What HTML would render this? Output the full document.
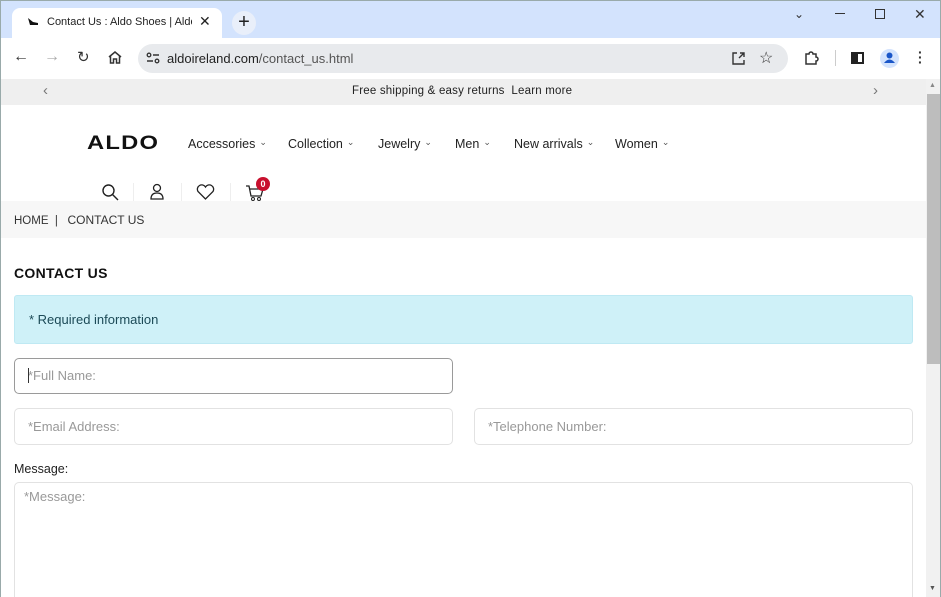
<!DOCTYPE html>
<html><head><meta charset="utf-8"><style>
*{box-sizing:border-box;margin:0;padding:0}
html,body{width:941px;height:597px;overflow:hidden}
body{font-family:"Liberation Sans",sans-serif;background:#fff;position:relative;color:#222}
.abs{position:absolute}
.nav a{position:absolute;top:137px;font-size:12.5px;color:#222;white-space:nowrap}
.nav a:after{content:"⌄";font-size:9px;margin-left:4px;position:relative;top:-3px;color:#555}
.inp{position:absolute;border:1px solid #e2e2e2;border-radius:5px;font-size:13px;color:#999;padding-left:13px}
</style></head><body>
<div class="abs" style="left:0;top:0;width:941px;height:38px;background:#d3e3fd;border:1px solid #9aa;border-bottom:none"></div>
<div class="abs" style="left:12px;top:8px;width:210px;height:30px;background:#fff;border-radius:8px 8px 0 0"></div>
<svg class="abs" style="left:27px;top:17px" width="12" height="10"><path d="M1 1 L3 8 L11 8 L11 6 L6 5 Z" fill="#111"/></svg>
<div class="abs" style="left:47px;top:16px;width:145px;overflow:hidden;white-space:nowrap;font-size:11px;color:#222">Contact Us : Aldo Shoes | Aldo | Aldo</div>
<div class="abs" style="left:199px;top:13px;font-size:14px">✕</div>
<div class="abs" style="left:232px;top:11px;width:24px;height:24px;border-radius:50%;background:#e9effa;text-align:center;font-size:20px;line-height:22px">+</div>
<div class="abs" style="left:794px;top:7px;font-size:12px;color:#333">⌄</div>
<div class="abs" style="left:835px;top:13px;width:10px;height:1px;background:#333"></div>
<div class="abs" style="left:875px;top:9px;width:10px;height:10px;border:1px solid #333"></div>
<div class="abs" style="left:914px;top:6px;font-size:14px;color:#333">✕</div>
<div class="abs" style="left:0;top:38px;width:941px;height:41px;background:#fff;border-left:1px solid #9aa;border-right:1px solid #9aa"></div>
<div class="abs" style="left:13px;top:48px;font-size:16px;color:#333">←</div>
<div class="abs" style="left:44px;top:48px;font-size:16px;color:#aaa">→</div>
<div class="abs" style="left:77px;top:48px;font-size:15px;color:#333">↻</div>
<svg class="abs" style="left:107px;top:50px" width="16" height="15"><path d="M2 7 L8 2 L14 7 M3.5 6 V13 H6.5 V9 H9.5 V13 H12.5 V6" fill="none" stroke="#333" stroke-width="1.5"/></svg>
<div class="abs" style="left:138px;top:44px;width:650px;height:29px;background:#e8eaed;border-radius:15px"></div>
<svg class="abs" style="left:146px;top:51px" width="14" height="14"><circle cx="3" cy="4" r="1.8" fill="none" stroke="#333" stroke-width="1.3"/><path d="M7 4 H13 M1 10 H7" stroke="#333" stroke-width="1.4"/><circle cx="11" cy="10" r="1.8" fill="none" stroke="#333" stroke-width="1.3"/></svg>
<div class="abs" style="left:167px;top:51px;font-size:13px;color:#222">aldoireland.com<span style="color:#555">/contact_us.html</span></div>
<svg class="abs" style="left:731px;top:51px" width="15" height="14"><path d="M6 2 H2 V13 H13 V9 M8 7 L13 2 M9 2 H13 V6" fill="none" stroke="#333" stroke-width="1.4"/></svg>
<div class="abs" style="left:759px;top:48px;font-size:16px;color:#333">☆</div>
<svg class="abs" style="left:803px;top:50px" width="16" height="16"><path d="M3 4 H6 A2 2 0 0 1 10 4 H13 V7 A2 2 0 0 1 13 11 V14 H3 Z" fill="none" stroke="#333" stroke-width="1.5"/></svg>
<div class="abs" style="left:835px;top:50px;width:1px;height:16px;background:#ccc"></div>
<div class="abs" style="left:851px;top:52px;width:13px;height:12px;border:2px solid #222;border-left-width:7px"></div>
<div class="abs" style="left:880px;top:49px;width:19px;height:19px;border-radius:50%;background:#d3e3fd"></div>
<svg class="abs" style="left:883px;top:51px" width="13" height="14"><circle cx="6.5" cy="4.5" r="3" fill="#1a56c8"/><path d="M1 12 Q6.5 5 12 12 Z" fill="#1a56c8"/></svg>
<div class="abs" style="left:918px;top:50px;font-size:14px;font-weight:bold;line-height:5px;color:#333">·<br>·<br>·</div>
<div class="abs" style="left:0;top:79px;width:926px;height:518px;background:#fff;border-left:1px solid #9aa"></div>
<div class="abs" style="left:1px;top:79px;width:925px;height:26px;background:#efefef"></div>
<div class="abs" style="left:43px;top:82px;font-size:15px;color:#777">‹</div>
<div class="abs" style="left:873px;top:82px;font-size:15px;color:#777">›</div>
<div class="abs" style="left:352px;top:85px;font-size:11.5px;color:#222;letter-spacing:0.2px">Free shipping &amp; easy returns&nbsp; Learn more</div>
<div class="abs" style="left:926px;top:79px;width:15px;height:518px;background:#f1f1f1;border-right:1px solid #9aa"></div>
<div class="abs" style="left:927px;top:94px;width:13px;height:270px;background:#bdbdbd"></div>
<div class="abs" style="left:929px;top:82px;font-size:7px;color:#888">▲</div>
<div class="abs" style="left:929px;top:585px;font-size:7px;color:#555">▼</div>
<div class="abs" style="left:87px;top:133px;font-size:19px;font-weight:900;letter-spacing:1px;color:#111;transform:scaleX(1.25);transform-origin:left">ALDO</div>
<div class="nav">
<a style="left:188px">Accessories</a><a style="left:288px">Collection</a><a style="left:378px">Jewelry</a><a style="left:455px">Men</a><a style="left:514px">New arrivals</a><a style="left:615px">Women</a>
</div>
<svg class="abs" style="left:101px;top:183px" width="18" height="18"><circle cx="7.5" cy="7.5" r="5.5" fill="none" stroke="#222" stroke-width="1.4"/><path d="M11.5 11.5 L17 17" stroke="#222" stroke-width="1.4"/></svg>
<div class="abs" style="left:133px;top:183px;width:1px;height:18px;background:#eee"></div>
<svg class="abs" style="left:149px;top:183px" width="16" height="18"><circle cx="8" cy="5" r="3.5" fill="none" stroke="#222" stroke-width="1.3"/><path d="M2 16 Q2 10 8 10 Q14 10 14 16 Z" fill="none" stroke="#222" stroke-width="1.3"/></svg>
<div class="abs" style="left:181px;top:183px;width:1px;height:18px;background:#eee"></div>
<svg class="abs" style="left:196px;top:184px" width="19" height="16"><path d="M9.5 15 L2 7.5 A4 4 0 0 1 9.5 3 A4 4 0 0 1 17 7.5 Z" fill="none" stroke="#222" stroke-width="1.3"/></svg>
<div class="abs" style="left:230px;top:183px;width:1px;height:18px;background:#eee"></div>
<svg class="abs" style="left:245px;top:184px" width="20" height="18"><path d="M1 2 H4 L6 12 H16 L18 5 H5" fill="none" stroke="#222" stroke-width="1.3"/><circle cx="8" cy="15" r="1.5" fill="none" stroke="#222"/><circle cx="14" cy="15" r="1.5" fill="none" stroke="#222"/></svg>
<div class="abs" style="left:256px;top:177px;width:14px;height:14px;border-radius:50%;background:#c8102e;color:#fff;font-size:9px;text-align:center;line-height:14px;font-weight:bold">0</div>
<div class="abs" style="left:1px;top:201px;width:925px;height:37px;background:#f7f7f7"></div>
<div class="abs" style="left:14px;top:213px;font-size:11.5px;color:#333">HOME&nbsp; |&nbsp;&nbsp; <span style="font-size:12px">CONTACT US</span></div>
<div class="abs" style="left:14px;top:265px;font-size:14px;font-weight:bold;color:#111;letter-spacing:0.3px">CONTACT US</div>
<div class="abs" style="left:14px;top:295px;width:899px;height:49px;background:#cff1f8;border:1px solid #bfe9f3;border-radius:3px"></div>
<div class="abs" style="left:29px;top:312px;font-size:13px;color:#1c4a57">* Required information</div>
<div class="inp" style="left:14px;top:358px;width:439px;height:36px;border-color:#9a9a9a;line-height:34px">*Full Name:</div>
<div class="abs" style="left:28px;top:368px;width:1px;height:15px;background:#333"></div>
<div class="inp" style="left:14px;top:408px;width:439px;height:37px;line-height:35px">*Email Address:</div>
<div class="inp" style="left:474px;top:408px;width:439px;height:37px;line-height:35px">*Telephone Number:</div>
<div class="abs" style="left:14px;top:462px;font-size:12.5px;color:#222">Message:</div>
<div class="inp" style="left:14px;top:482px;width:899px;height:125px;padding-left:9px;padding-top:6px">*Message:</div>
</body></html>
